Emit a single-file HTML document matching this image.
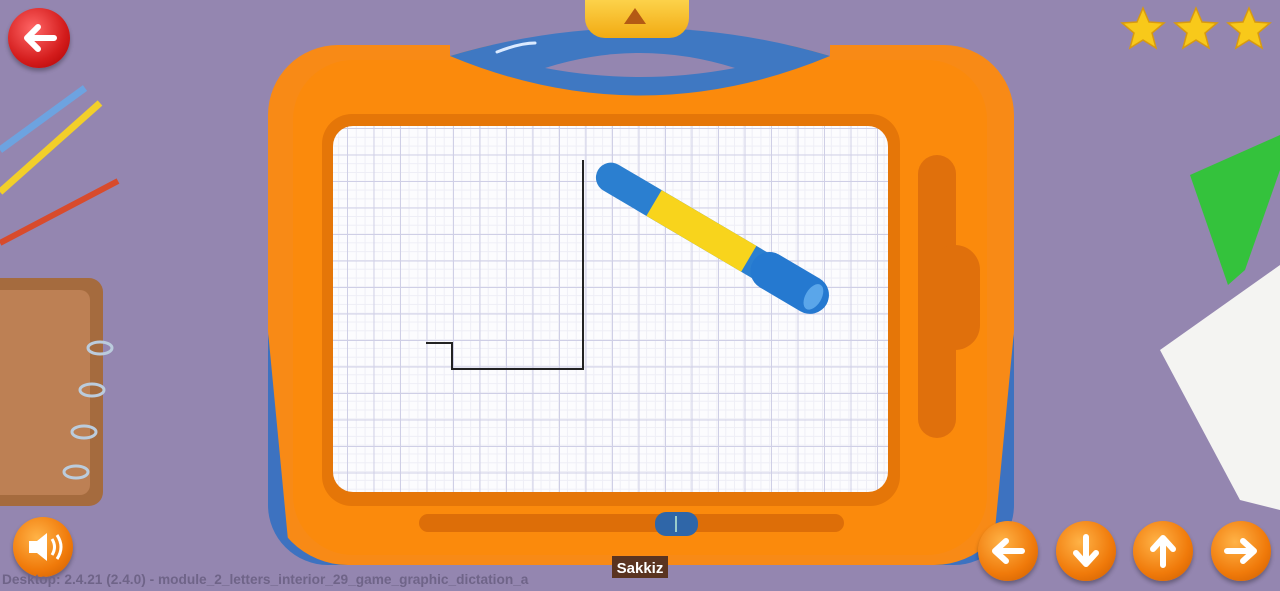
<!DOCTYPE html>
<html><head><style>
*{margin:0;padding:0;box-sizing:border-box}
body{width:1280px;height:591px;overflow:hidden;background:#9486b0;position:relative;font-family:"Liberation Sans",sans-serif}
.a{position:absolute}
.btn{position:absolute;border-radius:50%;background:radial-gradient(circle at 40% 35%,#ffb347,#f07a0a 60%,#c85a00);box-shadow:0 3px 4px rgba(0,0,0,.3)}
.btn svg{position:absolute;left:0;top:0}
.grid{background-color:#fcfcfe;background-image:linear-gradient(#cfcfe6 1px,transparent 1px),linear-gradient(90deg,#cfcfe6 1px,transparent 1px),linear-gradient(#eeeef6 1px,transparent 1px),linear-gradient(90deg,#eeeef6 1px,transparent 1px);background-size:26.5px 26.5px,26.5px 26.5px,8.8px 8.8px,8.8px 8.8px;background-position:14px 2px}
</style></head><body>
<div class="a" style="left:268px;top:300px;width:746px;height:265px;background:#3d72c0;border-radius:40px 40px 60px 60px"></div>
<div class="a" style="left:268px;top:45px;width:746px;height:520px;background:#f88a16;border-radius:70px 70px 80px 80px;clip-path:polygon(0 0,100% 0,100% 55%,97% 100%,3% 100%,0 55%)"></div>
<div class="a" style="left:293px;top:60px;width:694px;height:495px;background:#fb8a0c;border-radius:60px"></div>
<svg class="a" style="left:0;top:0" width="1280" height="130">
<path d="M450,44 L830,44 L830,56 Q640,0 450,56Z" fill="#9486b0"/>
<path d="M450,56 Q640,0 830,56 Q640,135 450,56Z" fill="#3f78c2"/>
<path d="M545,68 Q640,38 735,68 Q640,86 545,68Z" fill="#9486b0"/>
<path d="M497,52 Q520,43 535,43" stroke="#dbeaff" stroke-width="3" fill="none" stroke-linecap="round"/>
</svg>
<div class="a" style="left:585px;top:0;width:104px;height:38px;background:linear-gradient(#fcd24a,#f2aa12);border-radius:0 0 20px 20px"></div>
<div class="a" style="left:624px;top:8px;width:0;height:0;border-left:11px solid transparent;border-right:11px solid transparent;border-bottom:16px solid #b45a14"></div>
<div class="a" style="left:322px;top:114px;width:578px;height:392px;background:#e57608;border-radius:30px"></div>
<div class="a grid" style="left:333px;top:126px;width:555px;height:366px;border-radius:20px"></div>
<div class="a" style="left:918px;top:155px;width:38px;height:283px;background:#e0700c;border-radius:20px"></div>
<div class="a" style="left:930px;top:245px;width:50px;height:105px;background:#e0700c;border-radius:40px"></div>
<div class="a" style="left:419px;top:514px;width:425px;height:18px;background:#dd6e08;border-radius:9px"></div>
<div class="a" style="left:655px;top:512px;width:43px;height:24px;background:#2f66a8;border-radius:11px"></div>
<div class="a" style="left:675px;top:516px;width:2px;height:16px;background:#9cc"></div>
<svg class="a" style="left:0;top:0" width="1280" height="591">
<polyline points="426,343 452,343 452,369 583,369 583,160" fill="none" stroke="#222" stroke-width="2"/>
<g transform="translate(598,170) rotate(30.5)">
<rect x="0" y="-15" width="265" height="30" rx="15" fill="#2b7fd0"/>
<rect x="65" y="-15" width="110" height="30" fill="#f8d41c"/>
<rect x="180" y="-19" width="85" height="38" rx="19" fill="#2579d0"/>
<ellipse cx="250" cy="0" rx="8" ry="14" fill="#5aa6ea"/>
</g>
<line x1="0" y1="150" x2="85" y2="88" stroke="#6da3e0" stroke-width="7"/>
<line x1="0" y1="192" x2="100" y2="103" stroke="#f2cf2a" stroke-width="7"/>
<line x1="0" y1="243" x2="118" y2="181" stroke="#d84b2c" stroke-width="6"/>
<polygon points="1190,175 1280,135 1280,170 1245,270 1228,285" fill="#34c23c"/>
<polygon points="1160,350 1280,265 1280,510 1240,500" fill="#f4f4f2"/>
<rect x="-20" y="278" width="123" height="228" rx="14" fill="#a56b3e"/>
<rect x="-20" y="290" width="110" height="205" rx="10" fill="#bd8054"/>
<g fill="none" stroke="#bcd" stroke-width="3"><ellipse cx="100" cy="348" rx="12" ry="6"/><ellipse cx="92" cy="390" rx="12" ry="6"/><ellipse cx="84" cy="432" rx="12" ry="6"/><ellipse cx="76" cy="472" rx="12" ry="6"/></g>
<g fill="#f8c91a" stroke="#d89a10" stroke-width="1.5">
<polygon points="1143,8 1149,22 1164,23 1152,33 1156,48 1143,40 1130,48 1134,33 1122,23 1137,22"/>
<polygon points="1196,8 1202,22 1217,23 1205,33 1209,48 1196,40 1183,48 1187,33 1175,23 1190,22"/>
<polygon points="1249,8 1255,22 1270,23 1258,33 1262,48 1249,40 1236,48 1240,33 1228,23 1243,22"/>
</g>
</svg>
<div class="a" style="left:8px;top:8px;width:62px;height:60px;border-radius:50%;background:radial-gradient(circle at 40% 35%,#f66,#d41c1c 60%,#a00);box-shadow:0 3px 4px rgba(0,0,0,.3)">
<svg width="62" height="60"><path d="M46 30H20M30 19L19 30L30 41" stroke="#fff" stroke-width="6" fill="none" stroke-linecap="round" stroke-linejoin="round"/></svg></div>
<div class="btn" style="left:13px;top:517px;width:60px;height:60px"><svg width="60" height="60"><path d="M16 24h8l10-8v28l-10-8h-8z" fill="#fff"/><path d="M39 22q5 8 0 16M44 18q8 12 0 24" stroke="#fff" stroke-width="3" fill="none"/></svg></div>
<div class="btn" style="left:978px;top:521px;width:60px;height:60px"><svg width="60" height="60"><path d="M44 30H18M28 20L17 30L28 40" stroke="#fff" stroke-width="6" fill="none" stroke-linecap="round" stroke-linejoin="round"/></svg></div>
<div class="btn" style="left:1056px;top:521px;width:60px;height:60px"><svg width="60" height="60"><path d="M30 16V42M20 32L30 43L40 32" stroke="#fff" stroke-width="6" fill="none" stroke-linecap="round" stroke-linejoin="round"/></svg></div>
<div class="btn" style="left:1133px;top:521px;width:60px;height:60px"><svg width="60" height="60"><path d="M30 44V18M20 28L30 17L40 28" stroke="#fff" stroke-width="6" fill="none" stroke-linecap="round" stroke-linejoin="round"/></svg></div>
<div class="btn" style="left:1211px;top:521px;width:60px;height:60px"><svg width="60" height="60"><path d="M16 30H42M32 20L43 30L32 40" stroke="#fff" stroke-width="6" fill="none" stroke-linecap="round" stroke-linejoin="round"/></svg></div>
<div class="a" style="left:612px;top:556px;width:56px;height:22px;background:#5a3420;color:#fff;font-weight:bold;font-size:15px;text-align:center;line-height:26px;overflow:hidden">Sakkiz</div>
<div class="a" style="left:2px;top:572px;font-size:13.7px;font-weight:bold;color:#6f6488">Desktop: 2.4.21 (2.4.0) - module_2_letters_interior_29_game_graphic_dictation_a</div>
</body></html>
